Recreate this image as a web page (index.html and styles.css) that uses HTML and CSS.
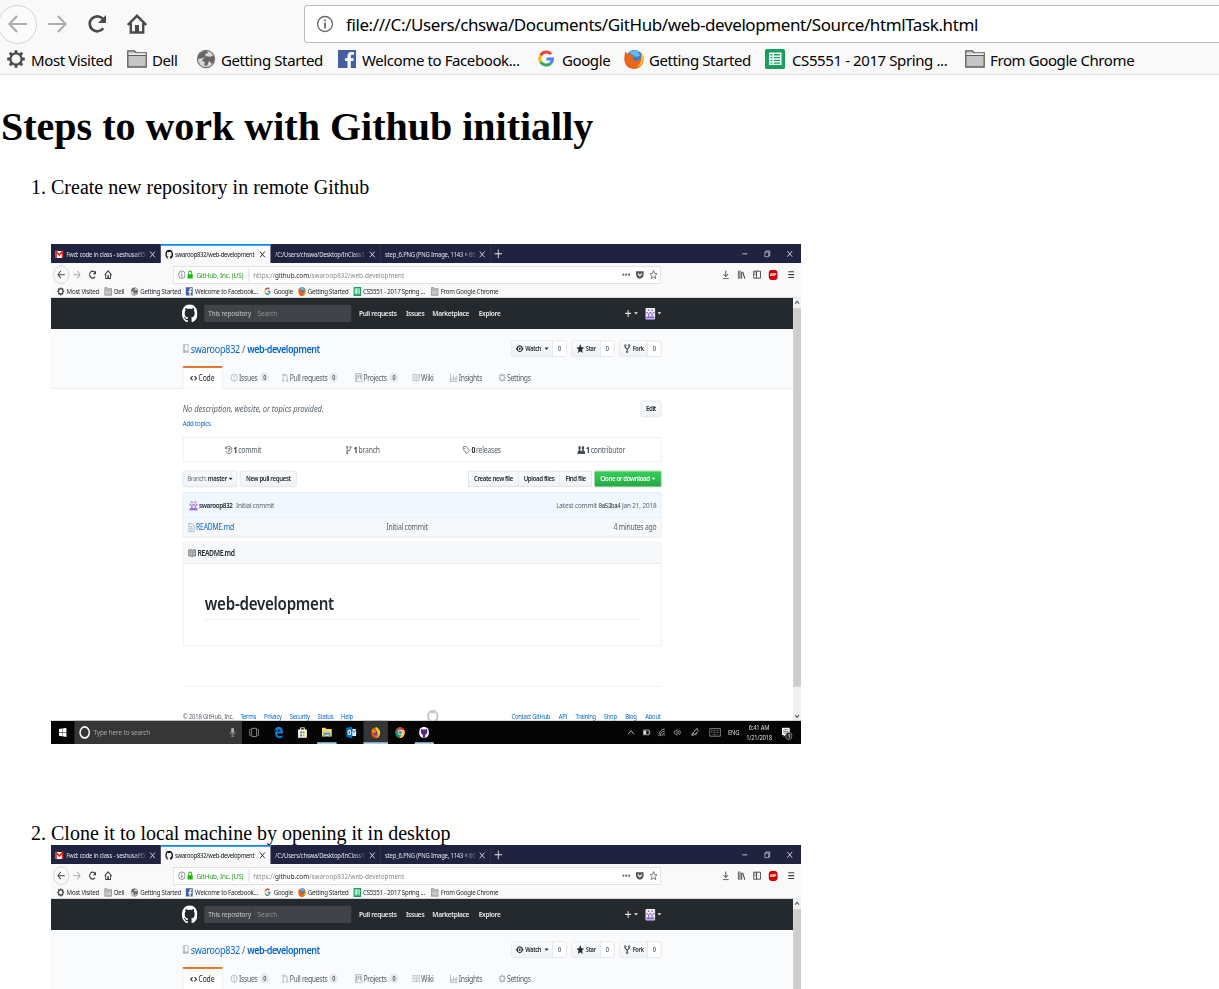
FILE: index.html
```html
<!DOCTYPE html>
<html lang="en">
<head>
<meta charset="utf-8">
<title>Steps to work with Github</title>
<link rel="stylesheet" href="styles.css">
</head>
<body>
<svg class="defs" aria-hidden="true">
  <symbol id="gear" viewBox="0 0 20 20"><g fill="none" stroke="currentColor"><circle cx="10" cy="10" r="5.600" stroke-width="2.200"/><path stroke-width="2.800" d="M10 1.200v3M10 15.800v3M1.200 10h3M15.800 10h3M3.800 3.800l2.100 2.100M14.100 14.100l2.100 2.100M3.800 16.200l2.100-2.100M14.100 5.900l2.100-2.100"/></g></symbol>
  <symbol id="folder" viewBox="0 0 20 20"><path d="M.8 18V1.800h6.400l2 2h10V18z" fill="#c6c6c6" stroke="#5c5c5c" stroke-width="1.300"/><path d="M1.500 4.500h6l2-.2h9.200V6H1.500z" fill="#eee"/><path d="M1 6.500h18" stroke="#5c5c5c"/></symbol>
  <symbol id="globe" viewBox="0 0 20 20"><circle cx="10" cy="10" r="8.600" fill="#d8d8d8" stroke="#777" stroke-width="1.200"/><path d="M2 7c2-4 6-5.500 9-5l1 2-3 1 1 3-3 1-5 1zM7 10l4-3 3 1 4-2c1 4 0 7-2 9l-3-3-2 5-3-1 1-3-3-1z" fill="#666"/></symbol>
  <symbol id="facebook" viewBox="0 0 20 20"><path fill="#4460a0" d="M1 1h18v18H1z"/><path fill="#fff" d="M10.500 19v-7H8V9.200h2.500V7c0-2.600 1.500-4 3.900-4H17v2.700h-1.600c-1.300 0-1.600.6-1.600 1.600v1.900h3l-.4 2.800h-2.600v7z"/></symbol>
  <symbol id="google" viewBox="0 0 20 20"><g fill="none" stroke-width="3"><path stroke="#ea4335" d="M14.200 5A6.500 6.500 0 0 0 3.700 6.500"/><path stroke="#fbbc05" d="M3.700 6.500a7 7 0 0 0 0 6.500"/><path stroke="#34a853" d="M3.700 13a6.500 6.500 0 0 0 9.700 1.600"/><path stroke="#4285f4" d="M13.400 14.600A6 6 0 0 0 15.500 10H9.500"/></g></symbol>
  <symbol id="firefox" viewBox="0 0 20 20"><circle cx="10.500" cy="9.500" r="8.500" fill="#2f7fc9"/><path d="M5 3.500C7 1.500 11 .8 14 2l2 5-4 1z" fill="#65b9e8"/><path d="M1 2.500l3 2.800c2-.8 4 0 4.500 1.200l2 .5-2 2.500c1 2.500 5 3 7.500.5 2-2 1.500-5 .5-7 3 2 3.800 5.500 3 9.500C18.500 17 14.500 20 10 20 4.500 20 .5 16 .3 10.500.2 7.500 1 5 1 2.500z" fill="#e8661c"/><path d="M16.500 2.500c3 2.500 3.800 6 3 9-1 3.500-3.500 6-7 7 5-3.500 6-10 4-16z" fill="#ffc62e"/></symbol>
  <symbol id="sheets" viewBox="0 0 20 20"><rect width="20" height="20" rx="1.500" fill="#16a05d"/><path fill="#fff" d="M4 3.500h12.500V16H4z"/><path d="M5.500 5h2v1.500h-2zm3.500 0h6v1.500H9zM5.500 8h2v1.300h-2zM9 8h6v1.300H9zm-3.500 2.800h2v1.300h-2zm3.500 0h6v1.300H9zm-3.500 2.700h2v1.200h-2zm3.500 0h6v1.200H9z" fill="#16a05d"/></symbol>
  <symbol id="back" viewBox="0 0 20 20"><path d="M19 10H2M9 2L1.500 10 9 18" fill="none" stroke="currentColor" stroke-width="2.200"/></symbol>
  <symbol id="forward" viewBox="0 0 20 20"><path d="M1 10h17M11 2l7.500 8-7.500 8" fill="none" stroke="currentColor" stroke-width="2.200"/></symbol>
  <symbol id="reload" viewBox="0 0 20 20"><path d="M16.300 14.200A7.500 7.500 0 1 1 16 5" fill="none" stroke="currentColor" stroke-width="2.700"/><path d="M19 1v8h-8z" fill="currentColor"/></symbol>
  <symbol id="home" viewBox="0 0 20 20"><path d="M.8 11L10 1.800l9.200 9.200M3.800 9v9.500h12.400V9" fill="none" stroke="currentColor" stroke-width="2.400"/><path d="M8 11h4v8H8z" fill="currentColor"/></symbol>
  <symbol id="info" viewBox="0 0 20 20"><circle cx="10" cy="10" r="8.300" fill="none" stroke="currentColor" stroke-width="1.500"/><path d="M9 8.500h2V15H9zM9 5h2v2H9z" fill="currentColor"/></symbol>
  <symbol id="mark" viewBox="0 0 16 16"><path fill="currentColor" d="M8 0C3.580 0 0 3.580 0 8c0 3.540 2.290 6.530 5.470 7.590.4.070.55-.17.55-.38 0-.19-.01-.82-.01-1.490-2.010.37-2.530-.49-2.690-.94-.09-.23-.48-.94-.82-1.130-.28-.15-.68-.52-.01-.53.63-.01 1.080.58 1.230.82.72 1.210 1.870.87 2.330.66.070-.52.280-.87.510-1.070-1.780-.2-3.640-.89-3.640-3.950 0-.87.310-1.590.820-2.150-.08-.2-.36-1.020.080-2.120 0 0 .67-.21 2.200.82.640-.18 1.320-.27 2-.27.680 0 1.360.09 2 .27 1.530-1.040 2.200-.82 2.200-.82.440 1.100.160 1.920.080 2.120.510.560.820 1.270.820 2.150 0 3.070-1.870 3.750-3.650 3.950.290.250.540.730.540 1.480 0 1.070-.01 1.930-.01 2.200 0 .210.150.460.550.380A8.013 8.013 0 0 0 16 8c0-4.420-3.580-8-8-8z"/></symbol>
  <symbol id="cross" viewBox="0 0 16 16"><path d="M3 3l10 10M13 3L3 13" stroke="currentColor" stroke-width="1.600"/></symbol>
  <symbol id="identicon" viewBox="0 0 20 20"><path fill="#f0f0f0" d="M0 0h20v20H0z"/><path fill="#9068dc" d="M2 14.500h16V18H2zM5 3h3v2.500H5zM12 3h3v2.500h-3zM2 7h3v2.500H2zM8 7h4v2.500H8zM15 7h3v2.500h-3zM5.500 9h2.300v6H5.500zM12.200 9h2.300v6h-2.300z"/></symbol>
  <symbol id="repo" viewBox="0 0 16 16"><path d="M3 .7h10v11.600H3zM3 12.300v2.500h2M9 14.800h4v-2.500M5.500 1v11M3 12h10" fill="none" stroke="currentColor" stroke-width="1.300"/><path d="M5 12.500h3V16l-1.500-1.200L5 16z" fill="currentColor"/></symbol>
  <symbol id="code" viewBox="0 0 16 16"><path d="M6 4.500L2 8l4 3.500M10 4.500L14 8l-4 3.500" fill="none" stroke="currentColor" stroke-width="1.900"/></symbol>
  <symbol id="issue" viewBox="0 0 16 16"><circle cx="8" cy="8" r="6.300" fill="none" stroke="currentColor" stroke-width="1.400"/><path d="M7.200 4h1.600v5H7.200zM7.200 10.300h1.600V12H7.200z" fill="currentColor"/></symbol>
  <symbol id="pull" viewBox="0 0 16 16"><g fill="none" stroke="currentColor" stroke-width="1.400"><path d="M2.500 4v8M10.500 12V5q0-1.500-1.500-1.500H6M7.500 1.500l-2 2 2 2"/><circle cx="2.500" cy="2.700" r="1.400"/><circle cx="2.500" cy="13.200" r="1.400"/><circle cx="10.500" cy="13.200" r="1.400"/></g></symbol>
  <symbol id="project" viewBox="0 0 16 16"><path d="M1 1h14v14H1z" fill="none" stroke="currentColor" stroke-width="1.400"/><path d="M3 3h2.500v10H3zM7 3h2.500v6H7zM11 3h2.500v8H11z" fill="currentColor"/></symbol>
  <symbol id="book" viewBox="0 0 16 16"><path d="M.8 2.500h6L8 3.500l1.200-1h6v10.500H9L8 14l-1-1H.8zM8 3.500V14M2.500 5h3.500M2.500 7.500h3.500M2.500 10h3.500M10 5h3.500M10 7.500h3.500M10 10h3.500" fill="none" stroke="currentColor" stroke-width="1.200"/></symbol>
  <symbol id="graph" viewBox="0 0 16 16"><path d="M1 1v14h15M4 13V8M7.500 13V4M11 13V7M14 13V5" fill="none" stroke="currentColor" stroke-width="1.500"/></symbol>
  <symbol id="eye" viewBox="0 0 16 16"><path d="M0 8q4-6 8-6t8 6q-4 6-8 6T0 8z" fill="currentColor"/><circle cx="8" cy="8" r="4" fill="#fff"/><circle cx="8" cy="8" r="2" fill="currentColor"/></symbol>
  <symbol id="star" viewBox="0 0 16 16"><path fill="currentColor" d="M8 0l2.300 5.300 5.700.5-4.400 3.700 1.400 5.700L8 12.200l-5 3 1.400-5.700L0 5.800l5.700-.5z"/></symbol>
  <symbol id="fork" viewBox="0 0 16 16"><path d="M4 3v2.500L8 9l4-3.500V3M8 9v4" fill="none" stroke="currentColor" stroke-width="1.800"/><g fill="#fff" stroke="currentColor" stroke-width="1.400"><circle cx="4" cy="2.500" r="1.600"/><circle cx="12" cy="2.500" r="1.600"/><circle cx="8" cy="13.300" r="1.600"/></g></symbol>
  <symbol id="branch" viewBox="0 0 16 16"><g fill="none" stroke="currentColor" stroke-width="1.700"><path d="M4.500 4v8M4.500 10q7 0 7-5"/><circle cx="4.500" cy="2.500" r="1.300"/><circle cx="4.500" cy="13.500" r="1.300"/><circle cx="11.500" cy="3.500" r="1.300"/></g></symbol>
  <symbol id="history" viewBox="0 0 16 16"><path d="M2.300 5A6.500 6.500 0 1 1 2 10M1 2v4h4M6 5h4.500v3H8v3.500" fill="none" stroke="currentColor" stroke-width="1.500"/></symbol>
  <symbol id="tag" viewBox="0 0 16 16"><path d="M1.500 2h5.700l7 7-5.500 5.500-7.200-7z" fill="none" stroke="currentColor" stroke-width="1.400"/><circle cx="4.500" cy="5" r="1.100" fill="currentColor"/></symbol>
  <symbol id="people" viewBox="0 0 16 16"><path d="M2 4q0-3 2.500-3T7 4q0 2-1 3v2l2 1 2-1V7Q9 6 9 4q0-3 2.500-3T14 4q0 2-1 3v2l3 2v4H0v-4l3-2V7Q2 6 2 4z" fill="currentColor"/></symbol>
  <symbol id="file" viewBox="0 0 16 16"><path d="M1 .8h7l4 4v10.400H1zM3.500 6H8M3.500 9h6M3.500 12h6" fill="none" stroke="currentColor" stroke-width="1.300"/></symbol>
</svg>

<header class="chrome">
  <div class="toolbar">
    <span class="round"><svg><use href="#back"/></svg></span>
    <svg class="dim"><use href="#forward"/></svg>
    <svg><use href="#reload"/></svg>
    <svg><use href="#home"/></svg>
    <div class="address"><svg><use href="#info"/></svg><span>file:///C:/Users/chswa/Documents/GitHub/web-development/Source/htmlTask.html</span></div>
  </div>
  <nav class="bookmarks">
    <span><svg><use href="#gear"/></svg>Most Visited</span>
    <span><svg><use href="#folder"/></svg>Dell</span>
    <span><svg><use href="#globe"/></svg>Getting Started</span>
    <span><svg><use href="#facebook"/></svg>Welcome to Facebook...</span>
    <span><svg><use href="#google"/></svg>Google</span>
    <span><svg><use href="#firefox"/></svg>Getting Started</span>
    <span class="wide"><svg><use href="#sheets"/></svg>CS5551 - 2017 Spring ...</span>
    <span><svg><use href="#folder"/></svg>From Google Chrome</span>
  </nav>
</header>

<main class="doc">
  <h1>Steps to work with Github initially</h1>
  <ol>
    <li class="spaced">Create new repository in remote Github<figure class="shot"></figure></li>
    <li>Clone it to local machine by opening it in desktop<figure class="shot"></figure></li>
  </ol>
</main>

<template id="desktop">
<div class="desktop">
  <div class="tabs">
    <div class="tab"><svg viewBox="0 0 16 16"><path fill="#fff" d="M0 2h16v12H0z"/><path d="M1.500 14V3L8 9l6.500-6v11" fill="none" stroke="#d93025" stroke-width="3"/></svg><span class="fade">Fwd: code in class - seshusai95@</span><svg><use href="#cross"/></svg></div>
    <div class="tab on"><svg><use href="#mark"/></svg><span>swaroop832/web-development</span><svg><use href="#cross"/></svg></div>
    <div class="tab plain"><span class="fade">/C:/Users/chswa/Desktop/InClass1/s</span><svg><use href="#cross"/></svg></div>
    <div class="tab plain last"><span class="fade">step_6.PNG (PNG Image, 1143 × 66</span><svg><use href="#cross"/></svg></div>
    <svg class="plus" viewBox="0 0 16 16"><path d="M8 0v16M0 8h16" stroke="currentColor" stroke-width="1.800"/></svg>
    <div class="win"><svg viewBox="0 0 16 16"><path d="M3 8h10" stroke="currentColor" stroke-width="1.500"/></svg><svg viewBox="0 0 16 16"><path d="M3 5h8v8H3zM5 5V3h8v8h-2" fill="none" stroke="currentColor" stroke-width="1.200"/></svg><svg><use href="#cross"/></svg></div>
  </div>
  <div class="nav">
    <span class="round"><svg><use href="#back"/></svg></span>
    <svg class="dim"><use href="#forward"/></svg><svg><use href="#reload"/></svg><svg><use href="#home"/></svg>
    <div class="url">
      <svg><use href="#info"/></svg>
      <svg class="lock" viewBox="0 0 16 16"><path d="M2 7h12v8.500H2z" fill="currentColor"/><path d="M4.500 8V4.500a3.500 3.500 0 0 1 7 0V8" fill="none" stroke="currentColor" stroke-width="2"/></svg>
      <span class="owner">GitHub, Inc. (US)</span><span class="path">https://<b>github.com</b>/swaroop832/web-development</span>
      <svg viewBox="0 0 16 16"><path d="M0 6.500h4v3H0zM6 6.500h4v3H6zM12 6.500h4v3h-4z" fill="currentColor"/></svg>
      <svg viewBox="0 0 16 16"><path d="M0 2h16v5a8 8 0 0 1-16 0z" fill="currentColor"/><path d="M4 6l4 4 4-4" fill="none" stroke="#fff" stroke-width="2"/></svg>
      <svg viewBox="0 0 16 16"><path d="M8 1l2.100 4.800 5 .5-3.800 3.400 1.200 5L8 12l-4.500 2.700 1.200-5L.9 6.300l5-.5z" fill="none" stroke="currentColor" stroke-width="1.400"/></svg>
    </div>
    <div class="tools">
      <svg viewBox="0 0 16 16"><path d="M8 1v10M3.500 7L8 11.500 12.500 7M2 15h12" fill="none" stroke="currentColor" stroke-width="1.700"/></svg>
      <svg viewBox="0 0 16 16"><path d="M1.500 1v14M5 1v14M8.500 3v12M10.500 3l4.500 12" fill="none" stroke="currentColor" stroke-width="1.900"/></svg>
      <svg viewBox="0 0 16 16"><path d="M1 2h14v12H1zM7 2v12M2.500 5H5M2.500 8H5" fill="none" stroke="currentColor" stroke-width="1.700"/></svg>
      <span class="abp">ABP</span>
      <svg class="menu" viewBox="0 0 16 16"><path d="M2 3h12M2 8h12M2 13h12" stroke="currentColor" stroke-width="1.900"/></svg>
    </div>
  </div>
  <div class="marks">
    <span><svg><use href="#gear"/></svg>Most Visited</span><span><svg><use href="#folder"/></svg>Dell</span><span><svg><use href="#globe"/></svg>Getting Started</span><span><svg><use href="#facebook"/></svg>Welcome to Facebook...</span><span><svg><use href="#google"/></svg>Google</span><span><svg><use href="#firefox"/></svg>Getting Started</span><span><svg><use href="#sheets"/></svg>CS5551 - 2017 Spring ...</span><span><svg><use href="#folder"/></svg>From Google Chrome</span>
  </div>
  <div class="view">
    <div class="page">
      <div class="ghbar"><div class="wrap">
        <svg class="logo"><use href="#mark"/></svg>
        <div class="find"><span>This repository</span><i>Search</i></div>
        <b>Pull requests</b><b>Issues</b><b>Marketplace</b><b>Explore</b>
        <span class="me"><svg viewBox="0 0 16 16"><path d="M8 2v12M2 8h12" stroke="currentColor" stroke-width="2"/></svg><em class="caret"></em><svg class="face"><use href="#identicon"/></svg><em class="caret"></em></span>
      </div></div>
      <div class="head"><div class="wrap">
        <div class="title"><svg><use href="#repo"/></svg><span>swaroop832 <i>/</i> <b>web-development</b></span>
          <div class="acts">
            <span class="act watch"><b><svg><use href="#eye"/></svg>Watch<em class="caret"></em></b><i>0</i></span>
            <span class="act"><b><svg><use href="#star"/></svg>Star</b><i>0</i></span>
            <span class="act fork"><b><svg><use href="#fork"/></svg>Fork</b><i>0</i></span>
          </div>
        </div>
        <div class="rtabs">
          <span class="cur"><svg><use href="#code"/></svg>Code</span>
          <span><svg><use href="#issue"/></svg>Issues<i>0</i></span>
          <span class="near"><svg><use href="#pull"/></svg>Pull requests<i>0</i></span>
          <span><svg><use href="#project"/></svg>Projects<i>0</i></span>
          <span><svg><use href="#book"/></svg>Wiki</span>
          <span><svg><use href="#graph"/></svg>Insights</span>
          <span><svg><use href="#gear"/></svg>Settings</span>
        </div>
      </div></div>
      <div class="wrap body">
        <div class="desc"><em>No description, website, or topics provided.</em><span class="btn">Edit</span></div>
        <div class="topics">Add topics</div>
        <div class="stats">
          <span><svg><use href="#history"/></svg><b>1</b> commit</span>
          <span><svg><use href="#branch"/></svg><b>1</b> branch</span>
          <span><svg><use href="#tag"/></svg><b>0</b> releases</span>
          <span><svg class="dark"><use href="#people"/></svg><b>1</b> contributor</span>
        </div>
        <div class="filenav">
          <span class="btn br"><i>Branch:</i>&nbsp;master<em class="caret"></em></span><span class="btn npr">New pull request</span>
          <span class="group"><span class="btn">Create new file</span><span class="btn">Upload files</span><span class="btn">Find file</span></span>
          <span class="btn green">Clone or download<em class="caret"></em></span>
        </div>
        <div class="tease"><svg><use href="#identicon"/></svg><b>swaroop832</b><span>Initial commit</span><span class="latest">Latest commit <code>0a53ba4</code> Jan 21, 2018</span></div>
        <div class="row"><svg><use href="#file"/></svg><a>README.md</a><span>Initial commit</span><span class="ago">4 minutes ago</span></div>
        <div class="readme"><div class="rhead"><svg><use href="#book"/></svg>README.md</div><div class="rbody"><div class="h">web-development</div></div></div>
        <div class="foot">
          <i>© 2018 GitHub, Inc.</i><a>Terms</a><a>Privacy</a><a>Security</a><a>Status</a><a>Help</a>
          <svg><use href="#mark"/></svg>
          <a>Contact GitHub</a><a>API</a><a>Training</a><a>Shop</a><a>Blog</a><a>About</a>
        </div>
      </div>
    </div>
    <div class="scroll"><svg viewBox="0 0 16 16"><path d="M4 10l4-4 4 4" fill="none" stroke="#505050" stroke-width="2"/></svg><div class="thumb"></div><svg viewBox="0 0 16 16"><path d="M4 6l4 4 4-4" fill="none" stroke="#505050" stroke-width="2"/></svg></div>
  </div>
  <div class="taskbar">
    <svg class="start" viewBox="0 0 16 16"><path fill="#fff" d="M0 2.300l6.500-.9v6.200H0zM7.300 1.300L16 0v7.600H7.300zM0 8.400h6.500v6.200L0 13.700zM7.300 8.400H16V16l-8.700-1.300z"/></svg>
    <div class="cortana"><span class="ring"></span><span>Type here to search</span><svg viewBox="0 0 16 16"><rect x="5" y="0" width="6" height="10" rx="3" fill="#aaa"/><path d="M3 7v2q0 3 5 3t5-3V7M8 12v3M5 15.300h6" fill="none" stroke="#999" stroke-width="1.300"/></svg></div>
    <div class="apps">
      <span><svg viewBox="0 0 20 20"><path d="M5 3h10v14H5zM3 5H1v10h2M17 5h2v10h-2" fill="none" stroke="#bbb" stroke-width="1.300"/></svg></span>
      <span><svg viewBox="0 0 20 20"><path d="M1 9C2 3 6 0 11 0c5 0 8 4 8 9v3H7c0 5 6 6 11 3v3.500C11 22 3 19 3 12c0-3 2-5.500 5-6.500C6 5 3 6 1 9zm6.500-.5H14c0-5-6-4.500-6.500 0z" fill="#0b84dc"/></svg></span>
      <span><svg viewBox="0 0 20 20"><path d="M1 5h18v14H1z" fill="#fff"/><path d="M6 6V2h8v4" fill="none" stroke="#fff" stroke-width="1.500"/><path fill="#f25022" d="M5.500 8h4v4h-4z"/><path fill="#7fba00" d="M10.500 8h4v4h-4z"/><path fill="#00a4ef" d="M5.500 13h4v4h-4z"/><path fill="#ffb900" d="M10.500 13h4v4h-4z"/></svg></span>
      <span class="run"><svg viewBox="0 0 20 20"><path d="M0 2h7l2 2h11v13H0z" fill="#f8d775"/><path d="M3 10h14v8h-3v-4H6v4H3z" fill="#4ba3dc"/></svg></span>
      <span><svg viewBox="0 0 20 20"><path d="M10 4h10v12H10z" fill="#dcecf8"/><path d="M11 5l4.500 5L20 5" fill="none" stroke="#0072c6" stroke-width="1.500"/><path d="M0 2l12-2v20L0 18z" fill="#0072c6"/><ellipse cx="6" cy="10" rx="2.800" ry="3.600" fill="none" stroke="#fff" stroke-width="2"/></svg></span>
      <span class="run active"><svg viewBox="0 0 20 20"><circle cx="10" cy="10.500" r="9" fill="#f4511e"/><path d="M10 0c7 3 10 8 9 12-1 5-5 8-9 8 5-3 6-6 4-10-2-3-5-5-4-10z" fill="#ffca28"/><circle cx="9" cy="11" r="4" fill="#3f51b5"/><path d="M1 7l4-4 1 4 5 1-3 4z" fill="#ff8f00"/></svg></span>
      <span><svg viewBox="0 0 20 20"><circle cx="10" cy="10" r="9.500" fill="#db4437"/><path d="M1.800 5A9.500 9.500 0 0 0 9 19.500l5-7.500-8 0z" fill="#0f9d58"/><path d="M9 19.500A9.500 9.500 0 0 0 18.600 6H10l4 6z" fill="#ffcd40"/><circle cx="10" cy="10" r="4.500" fill="#fff"/><circle cx="10" cy="10" r="3.500" fill="#4285f4"/></svg></span>
      <span class="run"><svg viewBox="0 0 20 20"><circle cx="10" cy="10" r="10" fill="#fff"/><path d="M4 3.500l3 1.300h6l3-1.300.7 4.500c0 4-2 5.500-4.200 6V19h-5v-5C5.300 13.500 3.300 12 3.300 8z" fill="#55267e"/></svg></span>
    </div>
    <div class="tray">
      <svg viewBox="0 0 16 16"><path d="M2 11l6-6 6 6" fill="none" stroke="#ddd" stroke-width="1.500"/></svg>
      <svg viewBox="0 0 16 16"><path d="M1 4h12v8H1zM14.500 6v4" fill="none" stroke="#ddd" stroke-width="1.400"/><path d="M2 5h5v6H2z" fill="#ddd"/></svg>
      <svg viewBox="0 0 16 16"><path d="M2 14A12 12 0 0 1 14 2M5 14a9 9 0 0 1 9-8M8.500 14a6 6 0 0 1 5.500-4.500M12 14l2-1.500" fill="none" stroke="#bbb" stroke-width="1.500"/></svg>
      <svg viewBox="0 0 16 16"><path d="M1 6h2.500L7 3v10l-3.500-3H1zM9.500 5.500q2 2.500 0 5M12 3.500q4 4.500 0 9" fill="none" stroke="#ccc" stroke-width="1.200"/></svg>
      <svg viewBox="0 0 16 16"><path d="M1 13q0-4 4-3 3 1 0 3t-3-3M4 9l8-8 1 3 2 1-8 7 4-1 1-2" fill="none" stroke="#ccc" stroke-width="1.400"/></svg>
      <svg class="keys" viewBox="0 0 24 16"><path d="M1 1.500h22v13H1z" fill="none" stroke="#ccc" stroke-width="1.200"/><path d="M4 5h16M4 8h16M7 11.500h10" stroke="#aaa" stroke-width="1.200" stroke-dasharray="2 1"/></svg>
      <span>ENG</span><span class="clock">6:41 AM<br>1/21/2018</span>
      <span class="note"><svg viewBox="0 0 16 16"><path d="M1 1h14v11H7l-3 3v-3H1z" fill="#fff"/><path d="M3.500 4h9M3.500 6.500h9M3.500 9h6" stroke="#333"/></svg><b>1</b></span>
    </div>
  </div>
</div>
</template>
<script src="script.js"></script>
</body>
</html>
```
FILE: styles.css
```css
* { box-sizing: border-box; }
html, body { height: 100%; }
body { margin: 0; background: #fff; color: #000; overflow: hidden; font-family: "Liberation Serif", serif; }
.defs { display: none; }
svg { flex: none; display: block; }

/* browser chrome */
.chrome { height: 75px; background: #f9f9fa; border-bottom: 1px solid #e0e0e1; font-family: "Noto Sans", sans-serif; color: #000; }
.toolbar { height: 48px; display: flex; align-items: center; color: #4a4a4c; overflow: hidden; }
.toolbar > svg { width: 20px; height: 20px; margin-right: 20px; }
.toolbar .dim { margin-left: 10px; color: #aeaeb0; }
.toolbar .round { flex: none; width: 39px; height: 39px; margin-left: -2px; border: 1px solid #d4d4d5; border-radius: 50%; display: flex; align-items: center; justify-content: center; background: #fbfbfc; color: #aeaeb0; }
.toolbar .round svg { width: 20px; height: 20px; }
.toolbar .address { margin-left: 137px; width: 930px; flex: none; height: 38px; border: 1px solid #b9b9ba; border-radius: 3px; background: #fff; display: flex; align-items: center; padding-left: 11px; gap: 12px; color: #6a6a6c; }
.address svg { width: 18px; height: 18px; }
.address span { color: #000; font-size: 17px; letter-spacing: -.4px; white-space: nowrap; }
.bookmarks { display: grid; grid-template-columns: 121px 69px 141px 200px 87px 141px 200px 200px; padding-left: 6px; height: 24px; font-size: 15px; letter-spacing: -.4px; }
.bookmarks span { display: flex; align-items: center; gap: 5px; white-space: nowrap; }
.bookmarks .wide { gap: 7px; }
.bookmarks svg { width: 20px; height: 20px; margin-top: -2px; color: #4a4a4c; }

/* document */
.doc { padding-left: 1px; font-size: 20px; line-height: 23px; }
.doc h1 { margin: 0; padding-top: 29px; font-size: 40px; line-height: 46px; }
.doc ol { margin: 26px 0 0; padding-left: 50px; }
.shot { margin: 0; width: 750px; height: 500px; overflow: hidden; }
.spaced .shot { margin: 45px 0 78px; }

/* pictured desktop, laid out at 1536x864 and squeezed to the figure */
.desktop { width: 1536px; height: 864px; transform: scale(.48828, .5787); transform-origin: 0 0; background: #fff; font: 12.500px/16px "Noto Sans", sans-serif; letter-spacing: -.45px; color: #24292e; display: flex; flex-direction: column; white-space: nowrap; }
.desktop svg { width: 16px; height: 16px; }
.desktop i { font-style: normal; }
.caret { display: inline-block; border: 4px solid transparent; border-top-color: currentColor; border-bottom: 0; margin-left: 4px; }

.tabs { height: 33px; flex: none; background: #202340; display: flex; align-items: center; color: #e6e6ee; }
.tab { width: 225px; height: 33px; display: flex; align-items: center; padding: 2px 8px 0 9px; gap: 6px; border-right: 1px solid #3b3e5c; font-size: 12px; letter-spacing: -.35px; }
.tab span { flex: 1; overflow: hidden; }
.tab.on span { letter-spacing: -.5px; overflow: visible; }
.tab.on { background: #f9f9fa; color: #111; border-top: 3px solid #0a84ff; padding-top: 0; gap: 4px; }
.fade { -webkit-mask-image: linear-gradient(90deg, #000 84%, transparent 104%); mask-image: linear-gradient(90deg, #000 84%, transparent 104%); }
.tabs .plus { margin-left: 8px; }
.win { margin-left: auto; display: flex; gap: 30px; padding-right: 15px; }

.nav { height: 40px; flex: none; background: #f9f9fa; display: flex; align-items: center; color: #3e3e42; }
.nav .round { width: 32px; height: 32px; margin: 0 8px 0 5px; border: 1px solid #bbb; border-radius: 50%; display: flex; align-items: center; justify-content: center; }
.nav > svg { margin-right: 16px; }
.nav .dim { color: #aaa; }
.url { margin-left: 109px; width: 999px; height: 31px; border: 1px solid #ccc; background: #fff; display: flex; align-items: center; padding: 0 6px 0 9px; gap: 2px; color: #555; }
.url .lock { color: #12bc00; width: 14px; margin-right: 4px; }
.owner { color: #18a012; width: 108px; border-right: 1px solid #88c888; margin-right: 6px; line-height: 22px; font-size: 13px; letter-spacing: -.25px; }
.path { flex: 1; color: #888; font-size: 13px; letter-spacing: 0; }
.path b { font-weight: 400; color: #222; }
.url svg:nth-last-child(-n+3) { margin-left: 10px; }
.tools { margin-left: auto; display: flex; align-items: center; gap: 16px; padding-right: 12px; }
.abp { width: 18px; height: 17px; border-radius: 6px; background: #d40000; color: #fff; font: bold 7px/17px "Noto Sans", sans-serif; text-align: center; }
.tools .menu { margin-left: 4px; }
.marks { height: 20px; flex: none; background: #f9f9fa; border-bottom: 1px solid #d0d0d0; display: grid; grid-template-columns: 97px 54px 112px 161px 70px 113px 159px 200px; padding-left: 12px; }
.marks span { display: flex; align-items: center; gap: 4px; margin-top: -2px; }

.view { flex: 1; min-height: 0; display: flex; }
.page { width: 1520px; overflow: hidden; font-size: 14px; }
.wrap { width: 980px; margin: 0 auto; }
.ghbar { background: #24292e; height: 54px; color: #e8e8e9; }
.ghbar .wrap { height: 54px; display: grid; grid-template-columns: 44px 317px 96px 54px 95px 100px 1fr; align-items: center; }
.ghbar b { font-weight: 600; font-size: 13.500px; letter-spacing: -.65px; }
.ghbar .logo { width: 32px; height: 32px; margin-left: -2px; color: #fff; }
.find { width: 301px; height: 30px; background: #404448; border-radius: 3px; display: flex; line-height: 30px; font-size: 13px; letter-spacing: -.2px; }
.find span { width: 100px; padding-left: 8px; border-right: 1px solid #303438; color: #c8cacb; }
.find i { padding-left: 9px; color: #8d9296; }
.me { display: flex; align-items: center; justify-content: flex-end; }
.desktop .me .face { width: 21px; height: 21px; margin-left: 15px; border-radius: 3px; }
.head { height: 103px; background: #fafbfc; border-bottom: 1px solid #e1e4e8; }
.title { height: 64px; padding-top: 3px; display: flex; align-items: center; font-size: 18.500px; color: #0366d6; letter-spacing: -.55px; }
.title > svg { color: #a3a8ad; margin-left: -2px; margin-right: 2px; }
.title i { color: #586069; }
.title b { font-weight: 600; letter-spacing: -.95px; }
.acts { margin-left: auto; display: flex; gap: 10px; font-size: 11.500px; color: #24292e; letter-spacing: -.3px; }
.act { display: flex; width: 88px; height: 28px; line-height: 26px; border: 1px solid #d1d5da; border-radius: 3px; background: #fff; }
.act.watch { width: 113px; }
.act.fork { width: 86px; }
.act b { flex: 1; display: flex; align-items: center; justify-content: center; background: linear-gradient(#fafbfc, #eff3f6); border-right: 1px solid #d1d5da; gap: 3px; letter-spacing: -.6px; font-weight: 600; }
.act i { width: 27px; text-align: center; color: #24292e; }
.rtabs { height: 39px; display: grid; grid-template-columns: 91px 106px 149px 118px 77px 99px 90px; color: #586069; letter-spacing: -.6px; }
.rtabs span { display: flex; align-items: center; padding-left: 6px; gap: 2px; }
.rtabs .near { gap: 0; }
.rtabs svg { color: #a5aab0; }
.rtabs .cur { width: 81px; background: #fff; border: 1px solid #e1e4e8; border-top: 3px solid #e36209; border-bottom: 0; color: #24292e; padding-left: 13px; letter-spacing: -.3px; }
.rtabs .cur svg { color: #24292e; }
.rtabs i { background: #e5e6e8; border-radius: 10px; font-size: 11px; font-weight: 600; width: 17px; line-height: 17px; text-align: center; margin-left: 4px; }

.body { color: #586069; }
.desc { height: 27px; margin-top: 21px; display: flex; justify-content: space-between; align-items: center; font-size: 15.500px; letter-spacing: -.15px; }
.desc em { margin-top: -2px; }
.btn { height: 28px; display: inline-flex; align-items: center; justify-content: center; border: 1px solid #ced2d7; border-radius: 3px; background: linear-gradient(#fafbfc, #eff3f6); color: #24292e; font-size: 12.500px; font-weight: 600; letter-spacing: -.75px; padding: 0 10px; }
.btn i { font-weight: 400; color: #6a737d; }
.topics { color: #0366d6; font-size: 12.500px; line-height: 16px; margin-top: 4px; }
.stats { margin-top: 16px; height: 43px; border: 1px solid #dfe2e5; border-radius: 3px; display: grid; grid-template-columns: repeat(4, 1fr); letter-spacing: -.4px; }
.stats span { display: flex; align-items: center; justify-content: center; gap: 2px; }
.stats b { color: #24292e; }
.stats .dark { color: #444d56; }
.filenav { margin-top: 15px; display: flex; }
.br { width: 111px; }
.npr { margin-left: 6px; width: 116px; }
.group { margin-left: auto; display: grid; grid-template-columns: 104px 84px 66px; }
.group .btn { border-radius: 0; padding: 0; }
.group .btn + .btn { border-left: 0; }
.btn.green { width: 137px; margin-left: 5px; padding: 0; background: linear-gradient(#34d058, #28a745); border-color: #28a745; color: #fff; }
.tease { margin-top: 9px; height: 45px; background: #f1f8ff; border: 1px solid #c8e1ff; border-radius: 3px 3px 0 0; display: flex; align-items: center; padding: 0 9px 0 11px; font-size: 13px; }
.desktop .tease svg { width: 20px; height: 20px; margin-right: 1px; }
.tease b { color: #24292e; width: 76px; letter-spacing: -.8px; font-weight: 600; }
.tease .latest { margin-left: auto; letter-spacing: -.25px; }
.tease code { font: 12px "Liberation Mono", monospace; letter-spacing: -.8px; color: #24292e; }
.row { height: 33px; background: #f6f8fa; border: 1px solid #dfe2e5; border-top: 0; display: grid; grid-template-columns: 16px 390px 1fr auto; align-items: center; padding: 0 9px 0 10px; }
.row svg { color: #8ba0b8; }
.row a { color: #0366d6; }
.readme { margin-top: 8px; height: 180px; border: 1px solid #dfe2e5; border-radius: 3px; }
.rhead { height: 37px; background: #f6f8fa; border-bottom: 1px solid #dfe2e5; display: flex; align-items: center; gap: 3px; padding-left: 10px; color: #24292e; font-weight: 600; letter-spacing: -.8px; }
.rbody { padding: 45px 44px 0; }
.rbody .h { height: 51px; border-bottom: 1px solid #e5e7ea; font-size: 31px; line-height: 44px; font-weight: 600; letter-spacing: -.55px; color: #24292e; }
.foot { margin-top: 69px; padding-top: 43px; border-top: 1px solid #e6e8eb; height: 60px; display: grid; grid-template-columns: 118px 48px 53px 57px 48px 176px 173px 97px 34px 58px 44px 41px 33px; font-size: 12px; line-height: 16px; color: #586069; letter-spacing: -.5px; }
.foot i { letter-spacing: -.35px; }
.foot a { color: #0366d6; }
.desktop .foot svg { width: 24px; height: 24px; margin-top: -3px; color: #c6cbd1; }
.scroll { width: 16px; background: #f0f0f0; display: flex; flex-direction: column; justify-content: space-between; align-items: center; }
.scroll .thumb { width: 16px; height: 654px; background: #cdcdcd; margin-bottom: 42px; }

.taskbar { height: 40px; flex: none; background: #050505; display: flex; align-items: center; color: #ddd; }
.taskbar .start { margin: 0 16px; }
.cortana { width: 343px; height: 40px; background: #363636; display: flex; align-items: center; padding: 0 11px 0 10px; gap: 9px; color: #aaa; font-size: 13px; letter-spacing: -.2px; }
.cortana svg { margin-left: auto; }
.ring { width: 22px; height: 22px; margin-right: -2px; border: 3px solid #fff; border-radius: 50%; }
.apps { display: grid; grid-template-columns: repeat(8, 49.800px); }
.apps span { height: 40px; display: flex; align-items: center; justify-content: center; }
.apps svg { width: 22px; height: 20px; }
.apps .run { border-bottom: 3px solid #a8cdee; margin: 0 5px; padding-top: 3px; }
.apps .active { background: #353535; margin: 0; }
.tray { margin-left: auto; padding-right: 10px; display: grid; grid-template-columns: 36px 28px 34px 30px 42px 40px 36px 68px 42px; justify-items: center; align-items: center; font-size: 12px; letter-spacing: -.5px; }
.desktop .tray .keys { width: 24px; }
.clock { text-align: center; line-height: 18px; }
.note { position: relative; }
.desktop .note svg { width: 18px; height: 18px; }
.note b { position: absolute; left: 8px; top: 8px; width: 14px; height: 14px; border: 1px solid #bbb; border-radius: 50%; background: #222; font-size: 9px; line-height: 12px; text-align: center; }
```
FILE: script.js
```js
// Every figure shows the same desktop picture.
const desktop = document.getElementById('desktop');
for (const shot of document.querySelectorAll('.shot')) {
  shot.append(desktop.content.cloneNode(true));
}
```
